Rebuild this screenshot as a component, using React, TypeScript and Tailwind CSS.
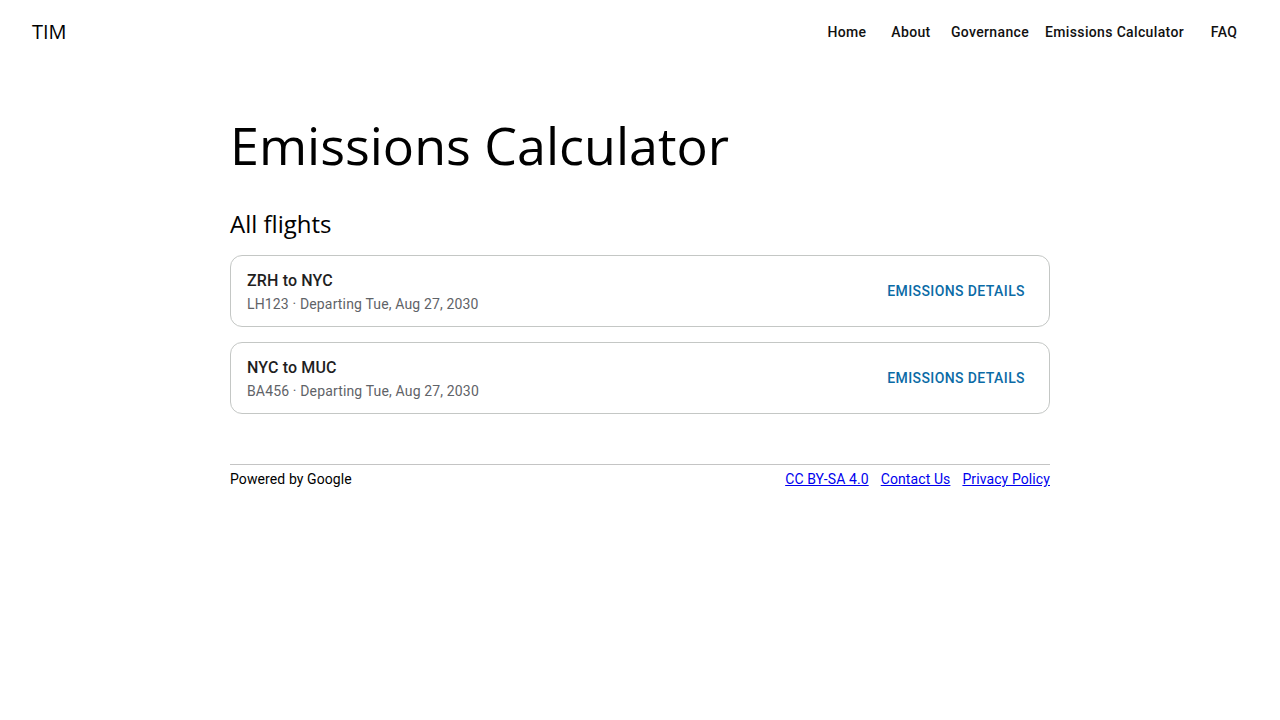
import React from 'react'

const flights = [
  { id: 'LH123', route: 'ZRH to NYC', date: 'Tue, Aug 27, 2030' },
  { id: 'BA456', route: 'NYC to MUC', date: 'Tue, Aug 27, 2030' },
]

const navItems = ['Home', 'About', 'Governance', 'Emissions Calculator', 'FAQ']

export default function App() {
  return (
    <div className="min-h-screen bg-white text-black font-['Roboto',sans-serif]">
      <header className="h-16 flex items-center justify-between pl-8 pr-6">
        <span className="font-['Open_Sans',sans-serif] text-[20px] leading-none">TIM</span>
        <nav className="flex items-center">
          {navItems.map((item) => (
            <a key={item} className="min-w-[64px] px-2 h-9 flex items-center justify-center text-[14px] font-medium tracking-[0.35px] text-[#111] cursor-pointer">
              {item}
            </a>
          ))}
        </nav>
      </header>

      <main className="w-[820px] mx-auto">
        <h1 className="font-['Open_Sans',sans-serif] text-[52px] leading-[64px] mt-[49px]">Emissions Calculator</h1>
        <h2 className="font-['Open_Sans',sans-serif] text-[24px] leading-8 mt-[31px]">All flights</h2>

        <div className="flex flex-col gap-[15px] mt-[15px]">
          {flights.map((f) => (
            <div key={f.id} className="h-[72px] border border-[#c4c7c5] rounded-xl flex items-center justify-between pl-4 pr-4">
              <div className="flex flex-col">
                <span className="text-[16px] font-medium leading-6 tracking-[0.15px] text-[#1f1f1f]">{f.route}</span>
                <span className="text-[14px] leading-5 tracking-[0.15px] text-[#5f6368] mt-[1px]">{f.id} · Departing {f.date}</span>
              </div>
              <button className="h-9 px-2 mt-[1px] text-[14px] font-medium uppercase tracking-[0.4px] text-[#0b6ba6]">
                Emissions details
              </button>
            </div>
          ))}
        </div>

        <footer className="mt-[50px] border-t border-[#c4c4c4] pt-[4px] flex justify-between text-[14px] leading-5 tracking-[0.1px]">
          <span>Powered by Google</span>
          <div className="flex gap-3">
            <a className="text-[#0000ee] underline cursor-pointer">CC BY-SA 4.0</a>
            <a className="text-[#0000ee] underline cursor-pointer">Contact Us</a>
            <a className="text-[#0000ee] underline cursor-pointer">Privacy Policy</a>
          </div>
        </footer>
      </main>
    </div>
  )
}
